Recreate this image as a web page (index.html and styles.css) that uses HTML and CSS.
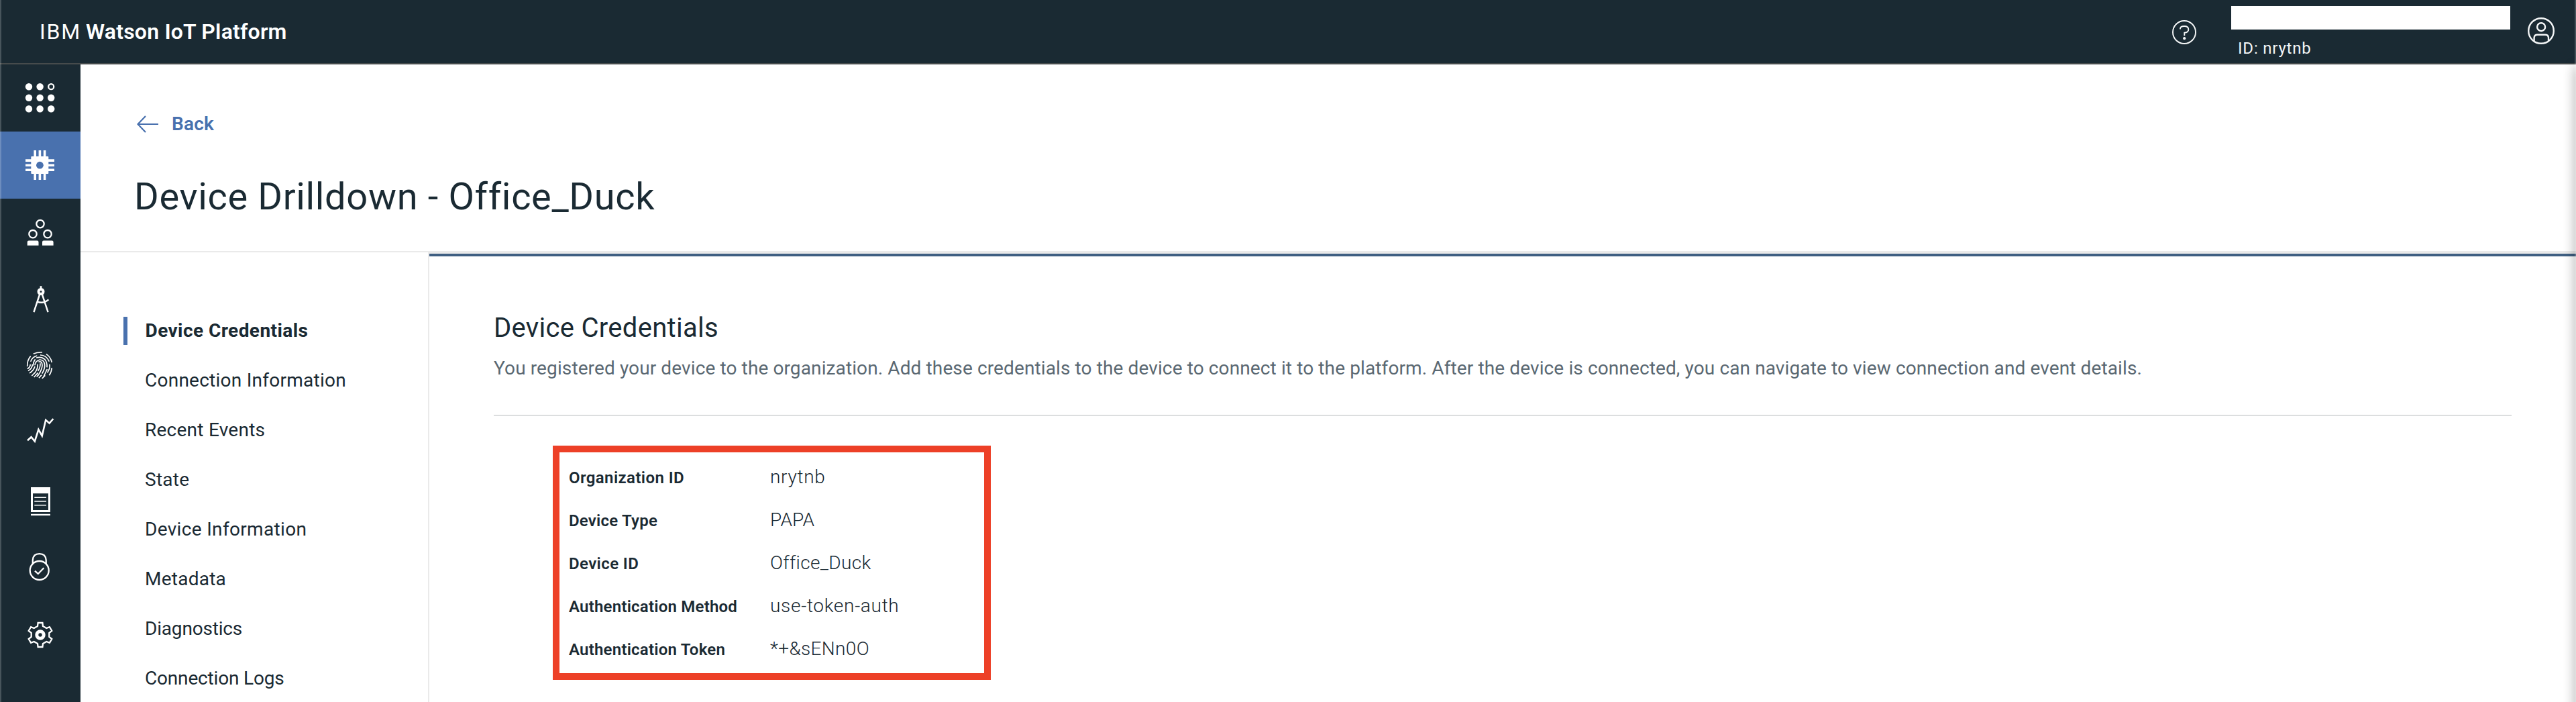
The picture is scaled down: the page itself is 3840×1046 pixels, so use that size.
FILE: index.html
```
<!DOCTYPE html>
<html lang="en">
<head>
<meta charset="utf-8">
<title>IBM Watson IoT Platform</title>
<link rel="stylesheet" href="styles.css">
</head>
<body>
<header class="topbar">
  <div class="brand"><span class="brand-ibm">IBM</span><span class="brand-name">Watson IoT Platform</span></div>
  <svg class="help" viewBox="0 0 36 36" fill="none" stroke="#f4f6f7" stroke-width="1.9">
    <circle cx="18" cy="18" r="17"/>
    <path d="M12 13.6V12.6Q12.4 9 18 9Q24.3 9 24.3 13.8Q24.3 18.6 18.3 18.8V23.2"/>
    <circle cx="18.2" cy="27.2" r="2.1" fill="#f4f6f7" stroke="none"/>
  </svg>
  <div class="account">
    <div class="account-name"></div>
    <div class="account-id">ID: nrytnb</div>
  </div>
  <svg class="user" viewBox="0 0 40 40" fill="none" stroke="#f4f6f7" stroke-width="2.4">
    <circle cx="20" cy="20" r="18.8"/>
    <circle cx="20.1" cy="14.2" r="6"/>
    <path d="M9.6 35V30Q10 25.8 14.5 25.8H26Q30.6 25.8 31 30V35"/>
  </svg>
</header>
<div class="shell">
  <nav class="rail">
    <a class="rail-item"><svg viewBox="0 0 120 100" fill="#fff"><circle cx="43" cy="33.2" r="5.2"/><circle cx="59.6" cy="33.2" r="5.2"/><circle cx="76.2" cy="33.2" r="4" fill="none" stroke="#fff" stroke-width="2.3"/><circle cx="43" cy="49.7" r="5.2"/><circle cx="59.6" cy="49.7" r="5.2"/><circle cx="76.2" cy="49.7" r="5.2"/><circle cx="43" cy="66.2" r="5.2"/><circle cx="59.6" cy="66.2" r="5.2"/><circle cx="76.2" cy="66.2" r="5.2"/></svg></a>
    <a class="rail-item rail-active"><svg viewBox="0 0 120 100" fill="none" stroke="#fff" stroke-width="3.6"><path d="M52.2 28V72M59.4 28V72M66.6 28V72M38 43.1H81M38 50.3H81M38 57.3H81"/><rect x="46.3" y="37" width="26" height="26" rx="1" fill="#fff" stroke="none"/><circle cx="59.4" cy="50.2" r="5.4" fill="#4971ae" stroke="none"/></svg></a>
    <a class="rail-item"><svg viewBox="0 0 120 100" fill="none" stroke="#fff" stroke-width="2.3"><circle cx="60" cy="37.6" r="5.7"/><circle cx="49" cy="52.7" r="5.7"/><circle cx="71" cy="52.7" r="5.7"/><path d="M40.7 69.7V64.7Q40.7 62.4 43 62.4H55.5Q57.5 62.4 57.5 64.7V69.7ZM63 69.7V64.7Q63 62.4 65 62.4H77.5Q79.6 62.4 79.6 64.7V69.7Z" fill="#fff" stroke="none"/></svg></a>
    <a class="rail-item"><svg viewBox="0 0 120 100" fill="none" stroke="#fff" stroke-width="2.4"><path d="M61 30.2V35" stroke-width="2.8"/><circle cx="61" cy="38.5" r="3.5" stroke-width="4"/><path d="M59.2 42.5L50.4 69.2M62.8 42.5L71.6 69.2M55.5 53.6Q65 57 72.4 50.4"/></svg></a>
    <a class="rail-item"><svg viewBox="0 0 120 100" fill="none" stroke="#fff"><g transform="translate(30 14) scale(.3333)" stroke-width="5"><path d="M59 52Q76 44 99 45M117 53Q137 66 142 90M47 62Q31 80 32 108M90 57Q117 57 130 86M47 86Q54 66 76 60M72 70Q93 62 110 76Q122 90 120 112M32 118Q43 116 46 99M58 104Q60 84 68 76M66 103Q67 84 88 78Q110 79 110 104Q110 120 98 140M82 88Q98 82 99 102Q99 120 82 146L74 154M90 94Q91 112 80 128M78 98V106Q78 118 68 134L52 150M55 98Q55 116 36 128M66 108Q61 126 42 138M132 98V116L122 136M142 114Q140 134 130 148M121 120L104 156M96 146L84 160M112 148L98 162M34 118L42 112M80 136L62 156"/></g></svg></a>
    <a class="rail-item"><svg viewBox="0 0 120 100" fill="none" stroke="#fff" stroke-width="2.6"><path d="M41 60.2L46.6 55.2L51.8 61.6L57.4 44L62.7 53.4L68.2 29.8L73.6 34.6L79.4 28"/></svg></a>
    <a class="rail-item"><svg viewBox="0 0 120 100" fill="none" stroke="#fff"><path d="M46 30H75V67H46ZM49 39.2V64H72V39.2Z" fill="#fff" fill-rule="evenodd" stroke="none"/><path d="M51.3 45.3H69M51.3 51H69M51.3 56.7H69" stroke-width="1.5"/><path d="M46 71H75" stroke-width="2.4"/></svg></a>
    <a class="rail-item"><svg viewBox="0 0 120 100" fill="none" stroke="#fff" stroke-width="2.3"><circle cx="58.7" cy="54" r="14"/><path d="M48.8 44.5V38.5Q49.5 29.2 58.7 29.2Q68 29.2 68.7 38.5V44.5M52 54.6L56.8 59L65.3 50.3"/></svg></a>
    <a class="rail-item"><svg viewBox="0 0 120 100" fill="none" stroke="#fff" stroke-width="2.3"><g transform="translate(60 50)"><path d="M-4 -13L-3.4 -18H3.4L4 -13L9.3 -10L13.9 -11.9L17.3 -6.1L13.3 -3V3L17.3 6.1L13.9 11.9L9.3 10L4 13L3.4 18H-3.4L-4 13L-9.3 10L-13.9 11.9L-17.3 6.1L-13.3 3V-3L-17.3 -6.1L-13.9 -11.9L-9.3 -10Z"/><circle r="5.2" stroke-width="5"/></g></svg></a>
  </nav>
  <main class="page">
    <div class="page-head">
      <a class="back"><svg viewBox="0 0 32 26" fill="none" stroke="#4971ae" stroke-width="2.2"><path d="M32 13H1.5M13 1L1.5 13L13 25"/></svg><span>Back</span></a>
      <h1>Device Drilldown - Office_Duck</h1>
    </div>
    <div class="page-body">
      <ul class="sections">
        <li class="current"><a>Device Credentials</a></li>
        <li><a>Connection Information</a></li>
        <li><a>Recent Events</a></li>
        <li><a>State</a></li>
        <li class="wide"><a>Device Information</a></li>
        <li><a>Metadata</a></li>
        <li class="snug"><a>Diagnostics</a></li>
        <li class="snug"><a>Connection Logs</a></li>
      </ul>
      <section class="detail">
        <h2>Device Credentials</h2>
        <p class="intro">You registered your device to the organization. Add these credentials to the device to connect it to the platform. After the device is connected, you can navigate to view connection and event details.</p>
        <dl class="credentials">
          <dt class="wide">Organization ID</dt><dd class="wide">nrytnb</dd>
          <dt>Device Type</dt><dd class="snug">PAPA</dd>
          <dt class="wide">Device ID</dt><dd>Office_Duck</dd>
          <dt>Authentication Method</dt><dd class="wide">use-token-auth</dd>
          <dt>Authentication Token</dt><dd>*+&amp;sENn0O</dd>
        </dl>
      </section>
    </div>
  </main>
</div>
<div class="panel-edge"></div>
<div class="frame"></div>
</body>
</html>
```
FILE: styles.css
```
* { box-sizing: border-box; }
body {
  margin: 0;
  height: 1046px;
  overflow: hidden;
  display: flex;
  flex-direction: column;
  background: #fff;
  color: #1a2a33;
  font-family: Roboto, "Liberation Sans", sans-serif;
  font-size: 28px;
}
svg { display: block; flex: none; }
h1, h2, p, ul, dl, dd { margin: 0; padding: 0; }

/* Top bar */
.topbar {
  flex: none;
  height: 96px;
  display: flex;
  align-items: flex-start;
  padding: 0 32px 0 59px;
  background: #1a2a33;
  border-bottom: 2px solid #464b4c;
  color: #fff;
}
.brand { display: flex; margin: 28px auto 0 0; font-size: 32px; line-height: 38px; }
.brand-ibm { width: 69px; letter-spacing: 1.78px; }
.brand-name { font-weight: 600; letter-spacing: .21px; }
.help { width: 36px; height: 36px; margin-top: 30px; }
.account { width: 416px; margin: 9px 26px 0 52px; }
.account-name { height: 35px; background: #fff; }
.account-id { padding: 14px 0 0 10px; font-size: 24px; line-height: 28px; letter-spacing: .8px; color: #f4f6f7; }
.user { width: 40px; height: 40px; margin-top: 26px; }

/* Icon rail */
.shell { flex: 1; display: flex; min-height: 0; }
.rail { flex: none; width: 120px; background: #1a2a33; }
.rail-item { display: block; height: 100px; }
.rail-item svg { width: 120px; height: 100px; }
.rail-active { background: #4971ae; }

/* Page */
.page { flex: 1; display: flex; flex-direction: column; min-width: 0; }
.page-head { flex: none; height: 280px; padding: 68px 0 0 80px; border-bottom: 2px solid #eaeaea; }
.back { display: flex; align-items: center; height: 41px; padding-left: 4px; color: #4971ae; font-weight: 600; line-height: 41px; letter-spacing: .2px; }
.back svg { width: 32px; height: 26px; margin-right: 20px; }
h1 { margin-top: 52px; font-size: 56px; line-height: 72px; font-weight: 400; letter-spacing: .65px; }
.page-body { flex: 1; display: flex; min-height: 0; }

/* Section list */
.sections { flex: none; width: 520px; padding-top: 80px; border-right: 2px solid #eaeaea; list-style: none; }
.sections li { height: 74px; padding: 16px 0 16px 64px; letter-spacing: .25px; }
.sections a { display: block; height: 42px; padding-left: 26px; border-left: 6px solid transparent; line-height: 41px; }
.sections .current { font-weight: 700; letter-spacing: .43px; }
.sections .current a { padding-left: 26.5px; border-color: #4971ae; }
.sections .wide { letter-spacing: .33px; }
.sections .snug { letter-spacing: -.18px; }

/* Detail pane */
.detail { flex: 1; min-width: 0; border-top: 2px solid #eaeaea; padding: 0 96px; }
.detail::before { content: ""; display: block; height: 4px; margin: 0 -96px 83px; background: #3f5f82; }
h2 { font-size: 40px; line-height: 47px; font-weight: 400; letter-spacing: .3px; }
.intro { height: 88px; margin-top: 20px; line-height: 33px; letter-spacing: .116px; color: #5a6872; border-bottom: 2px solid #dcdedf; white-space: nowrap; }
.credentials {
  width: 653px;
  height: 349px;
  margin: 44px 0 0 88px;
  padding: 20px 0 0 14px;
  border: 10px solid #ed4027;
  display: grid;
  grid-template-columns: 300px 1fr;
  grid-auto-rows: 33px;
  row-gap: 31px;
  align-items: baseline;
  align-content: start;
}
dt { font-size: 24px; line-height: 28px; font-weight: 600; letter-spacing: .22px; }
dt.wide { letter-spacing: .4px; }
dd { line-height: 33px; font-weight: 300; letter-spacing: .35px; }
dd.wide { letter-spacing: .7px; }
dd.snug { letter-spacing: .06px; }

/* Window edges */
.panel-edge { position: fixed; top: 100px; left: 100%; width: 10px; height: 1000px; box-shadow: 0 0 18px rgba(0, 0, 0, .45); }
.frame { position: fixed; inset: 0; border: solid rgba(255, 255, 255, .2); border-width: 0 2px; }
```
